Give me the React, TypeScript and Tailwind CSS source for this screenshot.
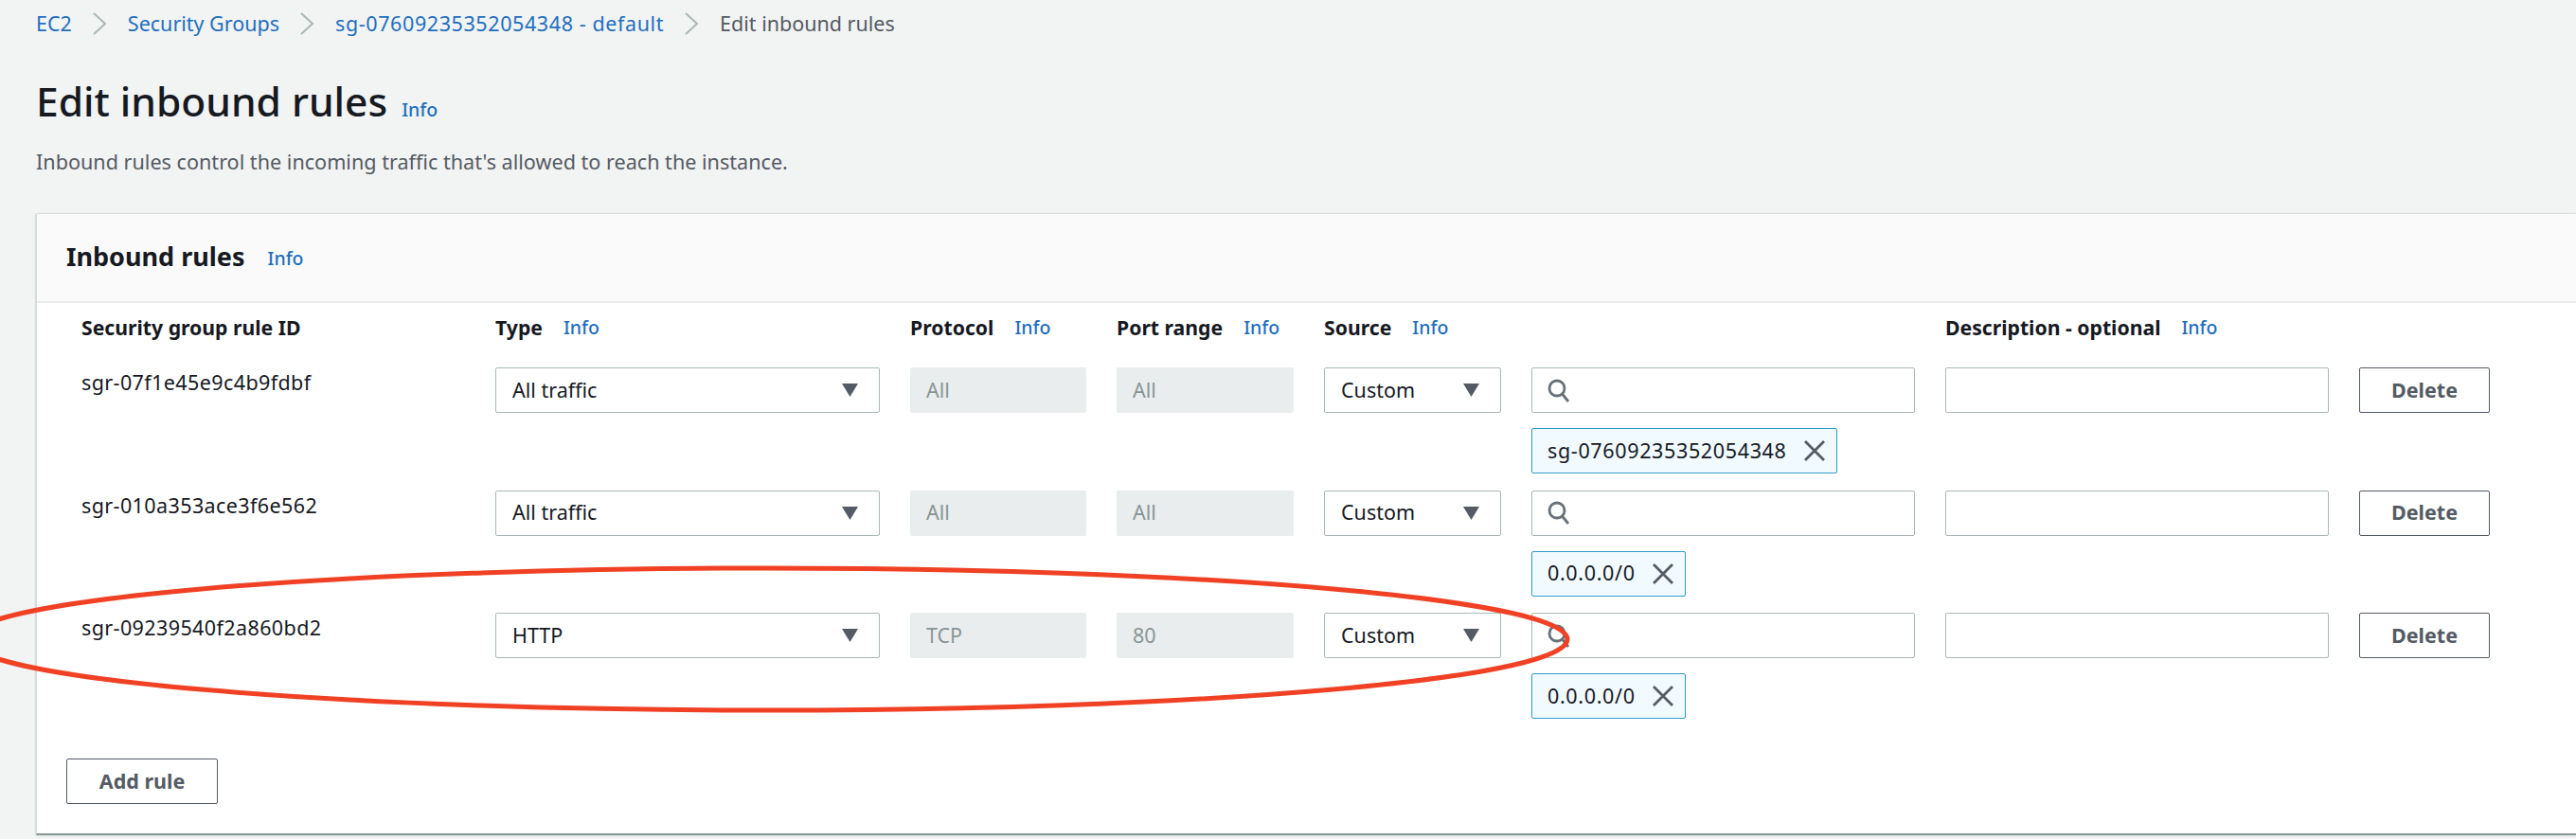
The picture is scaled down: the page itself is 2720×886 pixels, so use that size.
const font = "font-['Noto_Sans',sans-serif]";

function Info({ className = "" }: { className?: string }) {
  return <span className={`text-[19.5px] leading-[24px] font-medium text-[#1f6fbf] ${className}`}>Info</span>;
}

function Chevron() {
  return (
    <svg width="15" height="24" viewBox="0 0 15 24" fill="none" stroke="#aab7b8" strokeWidth="2">
      <path d="M1 1l12 11L1 23" />
    </svg>
  );
}

function Caret() {
  return (
    <svg width="17" height="14" viewBox="0 0 17 14" fill="#545b64">
      <path d="M0 0h17l-8.500 14z" />
    </svg>
  );
}

function SelectBox({ value }: { value: string }) {
  return (
    <div className="h-12 w-full flex items-center justify-between pl-[17px] pr-[22px] bg-white border border-[#aab7b8] rounded-[2px] text-[21.5px] text-[#16191f]">
      <span>{value}</span>
      <Caret />
    </div>
  );
}

function ReadOnly({ value }: { value: string }) {
  return (
    <div className="h-12 flex items-center pl-[17px] bg-[#eaeded] rounded-[2px] text-[21.5px] text-[#879596]">{value}</div>
  );
}

function SearchBox() {
  return (
    <div className="h-12 flex items-center pl-[16px] bg-white border border-[#aab7b8] rounded-[2px]">
      <svg width="25" height="25" viewBox="0 0 25 25" fill="none" stroke="#687078" strokeWidth="2.800">
        <circle cx="10" cy="10" r="8" />
        <path d="M15.500 16L22 24" />
      </svg>
    </div>
  );
}

function Tag({ value }: { value: string }) {
  return (
    <div className="h-12 w-fit flex items-center gap-[18px] pl-[16px] pr-[12px] bg-[#f1faff] border border-[#2e9bc9] rounded-[2px] text-[21.5px] tracking-[0.65px] text-[#16191f]">
      <span>{value}</span>
      <svg width="22" height="22" viewBox="0 0 22 22" fill="none" stroke="#545b64" strokeWidth="2.800">
        <path d="M1 1l20 20M21 1L1 21" />
      </svg>
    </div>
  );
}

function Button({ label, className = "" }: { label: string; className?: string }) {
  return (
    <div className={`h-12 flex items-center justify-center bg-white border border-[#545b64] rounded-[2px] text-[21.5px] font-bold text-[#545b64] ${className}`}>
      {label}
    </div>
  );
}

const rules = [
  { id: "sgr-07f1e45e9c4b9fdbf", type: "All traffic", protocol: "All", port: "All", tag: "sg-07609235352054348" },
  { id: "sgr-010a353ace3f6e562", type: "All traffic", protocol: "All", port: "All", tag: "0.0.0.0/0" },
  { id: "sgr-09239540f2a860bd2", type: "HTTP", protocol: "TCP", port: "80", tag: "0.0.0.0/0" },
];

const cols = "grid grid-cols-[405px_406px_186px_187px_187px_405px_405px_138px] gap-x-[32px]";

export default function App() {
  return (
    <div className={`relative w-[2720px] h-[886px] overflow-hidden bg-[#f2f3f3] ${font}`}>
      {/* Breadcrumbs */}
      <div className="flex items-center gap-[22px] pl-[38px] pt-[13px] h-[37px] text-[21.5px] text-[#1f6fbf]">
        <span>EC2</span>
        <Chevron />
        <span>Security Groups</span>
        <Chevron />
        <span className="tracking-[0.6px]">sg-07609235352054348 - default</span>
        <Chevron />
        <span className="text-[#545b64]">Edit inbound rules</span>
      </div>

      {/* Page title */}
      <div className="flex items-baseline gap-[15px] pl-[38px] mt-[44px]">
        <h1 className="text-[42.5px] leading-[52px] font-medium text-[#16191f]">Edit inbound rules</h1>
        <Info />
      </div>
      <p className="pl-[38px] mt-[24px] text-[21.6px] leading-[28px] text-[#545b64]">
        Inbound rules control the incoming traffic that's allowed to reach the instance.
      </p>

      {/* Card */}
      <div className="ml-[38px] mt-[41px] h-[656px] bg-white border-l border-[#d5dbdb] border-b-2 border-b-[#8d9a9b] shadow-[0_0_2px_rgba(0,28,36,0.3)]">
        <div className="h-[94px] flex items-center gap-[24px] pl-[31px] pb-[2px] bg-[#fafafa] border-b-2 border-[#eaeded]">
          <h2 className="text-[27px] font-bold text-[#16191f]">Inbound rules</h2>
          <Info className="mt-[4px]" />
        </div>

        <div className="pl-[47px]">
          <div className={`${cols} pt-[14px] pb-[30px] text-[21.2px] leading-[24px] font-bold text-[#16191f]`}>
            <div>Security group rule ID</div>
            <div className="flex gap-[22px]">Type <Info /></div>
            <div className="flex gap-[22px] whitespace-nowrap">Protocol <Info /></div>
            <div className="flex gap-[22px] whitespace-nowrap">Port range <Info /></div>
            <div className="flex gap-[22px]">Source <Info /></div>
            <div />
            <div className="flex gap-[22px] whitespace-nowrap">Description - optional <Info /></div>
            <div />
          </div>

          <div className="flex flex-col gap-[17.5px]">
            {rules.map((rule) => (
              <div key={rule.id} className={cols}>
                <div className="text-[21.5px] leading-[32px] tracking-[0.4px] text-[#16191f]">{rule.id}</div>
                <SelectBox value={rule.type} />
                <ReadOnly value={rule.protocol} />
                <ReadOnly value={rule.port} />
                <SelectBox value="Custom" />
                <div className="flex flex-col gap-[16px]">
                  <SearchBox />
                  <Tag value={rule.tag} />
                </div>
                <div className="h-12 bg-white border border-[#aab7b8] rounded-[2px]" />
                <Button label="Delete" />
              </div>
            ))}
          </div>
        </div>

        <div className="pl-[31px] mt-[42px]">
          <Button label="Add rule" className="w-[160px]" />
        </div>
      </div>

      {/* Hand-drawn annotation */}
      <svg className="absolute left-0 top-0 pointer-events-none" width="2720" height="886" fill="none">
        <ellipse cx="810" cy="675" rx="845" ry="75" stroke="#f04124" strokeWidth="5" />
      </svg>
    </div>
  );
}
